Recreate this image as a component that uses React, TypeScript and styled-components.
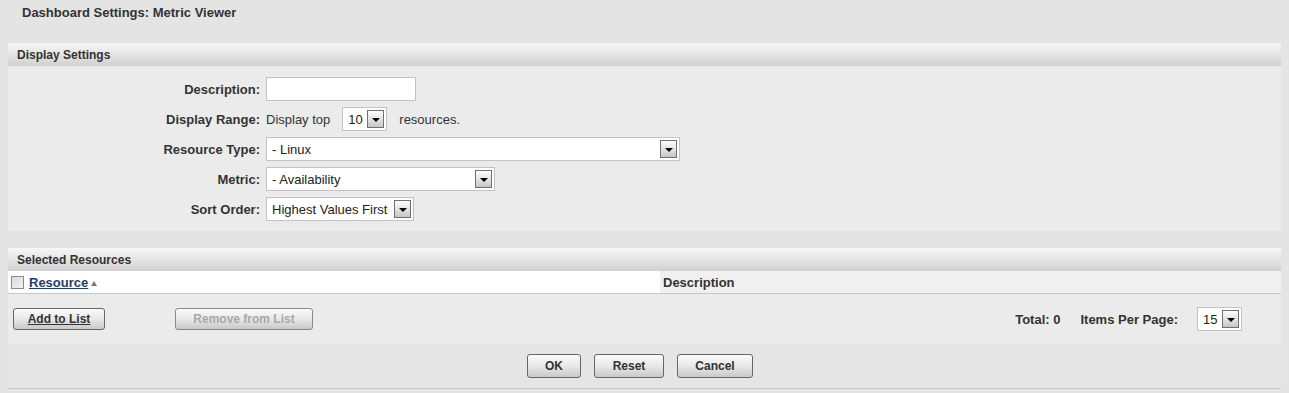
import { ReactNode } from "react";
import styled, { createGlobalStyle } from "styled-components";

const GlobalStyle = createGlobalStyle`
  html, body {
    margin: 0;
    padding: 0;
    background: #e4e4e4;
  }
  body {
    font-family: "Liberation Sans", Arial, sans-serif;
    color: #333;
  }
`

const Page = styled.div`
  padding: 0 8px;
  width: 1273px;
`

const Title = styled.div`
  height: 43px;
  box-sizing: border-box;
  padding: 5px 14px 0;
  font-size: 13px;
  line-height: 16px;
  font-weight: bold;
  color: #333;
`

const Panel = styled.div<{ $gap?: number }>`
  background: #ebebeb;
  margin-bottom: ${({ $gap }) => $gap ?? 0}px;
`

const PanelHeader = styled.div`
  height: 23px;
  display: flex;
  align-items: center;
  padding-left: 9px;
  font-size: 12px;
  font-weight: bold;
  color: #333;
  background: linear-gradient(to bottom, #f7f7f7 0%, #e6e6e6 45%, #d0d0d0 100%);
`

const FormGrid = styled.div`
  display: grid;
  grid-template-columns: 252px 1fr;
  column-gap: 6px;
  row-gap: 6px;
  padding: 11px 0 10px;
`

const Label = styled.div`
  display: flex;
  align-items: center;
  justify-content: flex-end;
  height: 24px;
  font-size: 13px;
  font-weight: bold;
  color: #333;
`

const Field = styled.div`
  display: flex;
  align-items: center;
  height: 24px;
  font-size: 13px;
  color: #333;
`

const TextBox = styled.input`
  box-sizing: border-box;
  width: 150px;
  height: 24px;
  border: 1px solid #c3c3c3;
  background: #fff;
  margin: 0;
  padding: 0 4px;
  font: 13px "Liberation Sans", Arial, sans-serif;
  outline: none;
`

const SelectBox = styled.div<{ $width: number }>`
  box-sizing: border-box;
  width: ${({ $width }) => $width}px;
  height: 24px;
  border: 1px solid #c3c3c3;
  background: #fff;
  display: flex;
  align-items: center;
  justify-content: space-between;
  padding: 0 2px 0 5px;
  font-size: 13px;
  color: #222;
  white-space: nowrap;
`

const ArrowBox = styled.span`
  box-sizing: border-box;
  width: 17px;
  height: 18px;
  border: 1px solid #707070;
  background: linear-gradient(to bottom, #fdfdfd 0%, #e4e4e4 50%, #c6c6c6 100%);
  display: flex;
  align-items: center;
  justify-content: center;
  flex-shrink: 0;
  &::after {
    content: "";
    border-left: 4px solid transparent;
    border-right: 4px solid transparent;
    border-top: 4px solid #000;
    margin-top: 1px;
  }
`

const Select = ({ width, value }: { width: number; value: string }) => (
  <SelectBox $width={width} role="combobox">
    <span>{value}</span>
    <ArrowBox />
  </SelectBox>
)

const InlineText = styled.span<{ $left?: number; $right?: number }>`
  margin-left: ${({ $left }) => $left ?? 0}px;
  margin-right: ${({ $right }) => $right ?? 0}px;
`

const TableHead = styled.div`
  display: grid;
  grid-template-columns: 652px 1fr;
  height: 22px;
  border-bottom: 1px solid #c8c8c8;
`

const HeadCell = styled.div<{ $shade?: boolean }>`
  display: flex;
  align-items: center;
  padding-left: ${({ $shade }) => ($shade ? 3 : 3)}px;
  background: ${({ $shade }) => ($shade ? "#f0f0f0" : "#fff")};
  font-size: 13px;
  font-weight: bold;
  color: #333;
`

const CheckBox = styled.span`
  box-sizing: border-box;
  width: 13px;
  height: 13px;
  border: 1px solid #8c8c8c;
  background: linear-gradient(135deg, #d8d8d8 0%, #f4f4f4 100%);
  margin-right: 5px;
`

const SortLink = styled.a`
  color: #1f3d6d;
  text-decoration: underline;
  cursor: pointer;
`

const SortArrow = styled.span`
  display: inline-block;
  margin-left: 3px;
  border-left: 3px solid transparent;
  border-right: 3px solid transparent;
  border-bottom: 5px solid #777;
  margin-top: 2px;
`

const ActionRow = styled.div`
  display: flex;
  align-items: center;
  height: 50px;
  padding: 0 39px 0 5px;
`

const Button = styled.button<{ $width: number; $height?: number; $disabled?: boolean; $underline?: boolean }>`
  box-sizing: border-box;
  width: ${({ $width }) => $width}px;
  height: ${({ $height }) => $height ?? 22}px;
  border: 1px solid ${({ $disabled }) => ($disabled ? "#8a8a8a" : "#666")};
  border-radius: 3px;
  background: linear-gradient(to bottom, #fbfbfb 0%, #e8e8e8 50%, #c9c9c9 100%);
  font: bold 12px "Liberation Sans", Arial, sans-serif;
  color: ${({ $disabled }) => ($disabled ? "#a8a8a8" : "#333")};
  text-decoration: ${({ $underline }) => ($underline ? "underline" : "none")};
  padding: 0;
  margin: 0;
  cursor: ${({ $disabled }) => ($disabled ? "default" : "pointer")};
`

const Spacer = styled.div`
  flex: 1;
`

const Summary = styled.span<{ $gap: number }>`
  font-size: 13px;
  font-weight: bold;
  color: #333;
  margin-right: ${({ $gap }) => $gap}px;
`

const Footer = styled.div`
  display: flex;
  justify-content: center;
  gap: 13px;
  padding: 10px 9px 10px 0;
  background: #e5e5e5;
  border-bottom: 1px solid #c8c8c8;
`

const Row = ({ label, children }: { label: string; children: ReactNode }) => (
  <>
    <Label>{label}</Label>
    <Field>{children}</Field>
  </>
)

export default function App() {
  return (
    <>
      <GlobalStyle />
      <Page>
        <Title>Dashboard Settings: Metric Viewer</Title>

        <Panel $gap={17}>
          <PanelHeader>Display Settings</PanelHeader>
          <FormGrid>
            <Row label="Description:">
              <TextBox />
            </Row>
            <Row label="Display Range:">
              <InlineText $right={12}>Display top</InlineText>
              <Select width={45} value="10" />
              <InlineText $left={12}>resources.</InlineText>
            </Row>
            <Row label="Resource Type:">
              <Select width={414} value="- Linux" />
            </Row>
            <Row label="Metric:">
              <Select width={229} value="- Availability" />
            </Row>
            <Row label="Sort Order:">
              <Select width={148} value="Highest Values First" />
            </Row>
          </FormGrid>
        </Panel>

        <Panel>
          <PanelHeader>Selected Resources</PanelHeader>
          <TableHead>
            <HeadCell>
              <CheckBox />
              <SortLink>Resource</SortLink>
              <SortArrow />
            </HeadCell>
            <HeadCell $shade>Description</HeadCell>
          </TableHead>
          <ActionRow>
            <Button $width={92} $underline>Add to List</Button>
            <InlineText $left={70} />
            <Button $width={138} $disabled>Remove from List</Button>
            <Spacer />
            <Summary $gap={20}>Total: 0</Summary>
            <Summary $gap={19}>Items Per Page:</Summary>
            <Select width={45} value="15" />
          </ActionRow>
          <Footer>
            <Button $width={54} $height={24}>OK</Button>
            <Button $width={70} $height={24}>Reset</Button>
            <Button $width={76} $height={24}>Cancel</Button>
          </Footer>
        </Panel>
      </Page>
    </>
  )
}
